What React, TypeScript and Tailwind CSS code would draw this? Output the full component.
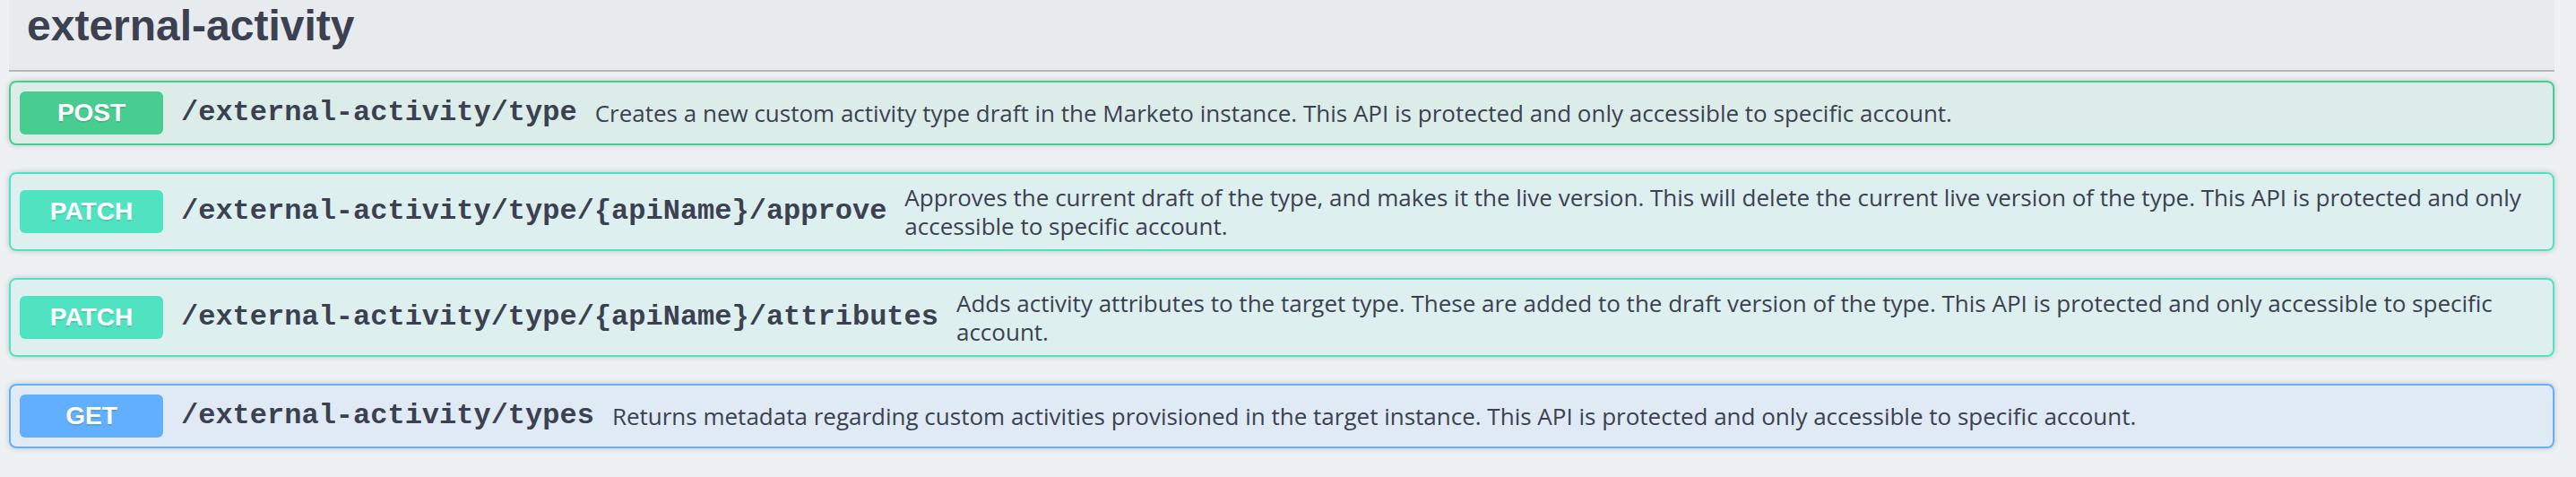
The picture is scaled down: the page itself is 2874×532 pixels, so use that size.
import React from "react";

type Op = {
  method: string;
  path: string;
  desc: string;
  kind: "post" | "patch" | "get";
};

const ops: Op[] = [
  {
    method: "POST",
    path: "/external-activity/type",
    desc: "Creates a new custom activity type draft in the Marketo instance. This API is protected and only accessible to specific account.",
    kind: "post",
  },
  {
    method: "PATCH",
    path: "/external-activity/type/{apiName}/approve",
    desc: "Approves the current draft of the type, and makes it the live version. This will delete the current live version of the type. This API is protected and only accessible to specific account.",
    kind: "patch",
  },
  {
    method: "PATCH",
    path: "/external-activity/type/{apiName}/attributes",
    desc: "Adds activity attributes to the target type. These are added to the draft version of the type. This API is protected and only accessible to specific account.",
    kind: "patch",
  },
  {
    method: "GET",
    path: "/external-activity/types",
    desc: "Returns metadata regarding custom activities provisioned in the target instance. This API is protected and only accessible to specific account.",
    kind: "get",
  },
];

const blockCls: Record<Op["kind"], string> = {
  post: "border-[#49cc90] bg-[rgba(73,204,144,0.1)]",
  patch: "border-[#50e3c2] bg-[rgba(80,227,194,0.1)]",
  get: "border-[#61affe] bg-[rgba(97,175,254,0.1)]",
};

const badgeCls: Record<Op["kind"], string> = {
  post: "bg-[#49cc90]",
  patch: "bg-[#50e3c2]",
  get: "bg-[#61affe]",
};

function OpBlock({ op }: { op: Op }) {
  return (
    <div
      className={`flex items-center rounded-[8px] border-2 p-[10px] shadow-[0_0_6px_rgba(0,0,0,0.19)] ${blockCls[op.kind]}`}
    >
      <div
        className={`flex h-[48px] w-[160px] shrink-0 items-center justify-center rounded-[6px] font-['Liberation_Sans',sans-serif] text-[28px] font-bold leading-[32px] text-white [text-shadow:0_2px_0_rgba(0,0,0,0.1)] ${badgeCls[op.kind]}`}
      >
        {op.method}
      </div>
      <div className="shrink-0 whitespace-nowrap px-[20px] font-['Liberation_Mono',monospace] text-[32px] font-bold leading-[40px] text-[#3b4151]">
        {op.path}
      </div>
      <div className="flex-1 font-['Open_Sans',sans-serif] text-[26px] leading-[32px] text-[#3b4151]">
        {op.desc}
      </div>
    </div>
  );
}

export default function App() {
  return (
    <div className="min-h-[532px] w-[2874px] bg-[#eef1f3]">
      <div className="ml-[10px] w-[2840px]">
        <div className="h-[80px] border-b-2 border-[rgba(59,65,81,0.3)] bg-[#e8ebed] pl-[20px] pt-[1px]">
          <h3 className="font-['Liberation_Sans',sans-serif] text-[48px] font-bold leading-[55px] text-[#3b4151]">
            external-activity
          </h3>
        </div>
        <div className="mt-[10px] flex flex-col gap-[30px]">
          {ops.map((op, i) => (
            <OpBlock key={i} op={op} />
          ))}
        </div>
      </div>
    </div>
  );
}
